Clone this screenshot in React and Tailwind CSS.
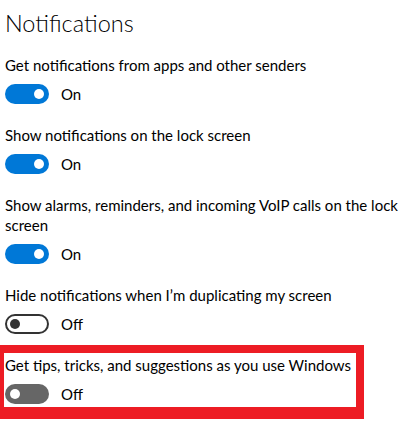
import React from "react";

function Toggle({ state }) {
  if (state === "on") {
    return (
      <div className="w-[44px] h-[20px] rounded-full bg-[#0078d7] flex items-center justify-end pr-[5px] shrink-0">
        <div className="w-[10px] h-[10px] rounded-full bg-white" />
      </div>
    );
  }
  if (state === "off") {
    return (
      <div className="w-[44px] h-[20px] rounded-full border-2 border-[#333333] flex items-center pl-[3px] shrink-0">
        <div className="w-[10px] h-[10px] rounded-full bg-[#333333]" />
      </div>
    );
  }
  return (
    <div className="w-[44px] h-[20px] rounded-full bg-[#666666] flex items-center pl-[5px] shrink-0">
      <div className="w-[10px] h-[10px] rounded-full bg-white" />
    </div>
  );
}

function Row({ label, state, className = "" }) {
  return (
    <div className={"flex flex-col " + className}>
      <div className="text-[15px] leading-[20px] text-black">{label}</div>
      <div className="flex items-center gap-[12px] mt-[9px]">
        <Toggle state={state} />
        <span className="text-[15px] leading-[20px] text-black">
          {state === "on" ? "On" : "Off"}
        </span>
      </div>
    </div>
  );
}

export default function App() {
  return (
    <div
      className="w-[415px] h-[440px] bg-white overflow-hidden"
      style={{ fontFamily: '"Lato", "Open Sans", sans-serif' }}
    >
      <div className="px-[5px] pt-[7px]">
        <h1 className="text-[23.5px] leading-[32px] font-light text-black">Notifications</h1>
        <div className="mt-[16px] flex flex-col gap-[21px]">
          <Row label={<span className="whitespace-nowrap">Get notifications from apps and other senders</span>} state="on" />
          <Row label={<span className="whitespace-nowrap">Show notifications on the lock screen</span>} state="on" />
          <Row
            label={
              <>
                <span className="whitespace-nowrap">Show alarms, reminders, and incoming VoIP calls on the lock</span>
                <br />
                screen
              </>
            }
            state="on"
          />
          <Row label={<span className="whitespace-nowrap">Hide notifications when I’m duplicating my screen</span>} state="off" />
        </div>
      </div>
      <div className="mt-[11px] w-[364px] border-t-[8px] border-r-[8px] border-b-[12px] border-l-[4px] border-[#ed1c24] pl-[1px] pt-[2px] pb-[3px]">
        <Row label={<span className="whitespace-nowrap">Get tips, tricks, and suggestions as you use Windows</span>} state="hover" />
      </div>
    </div>
  );
}
